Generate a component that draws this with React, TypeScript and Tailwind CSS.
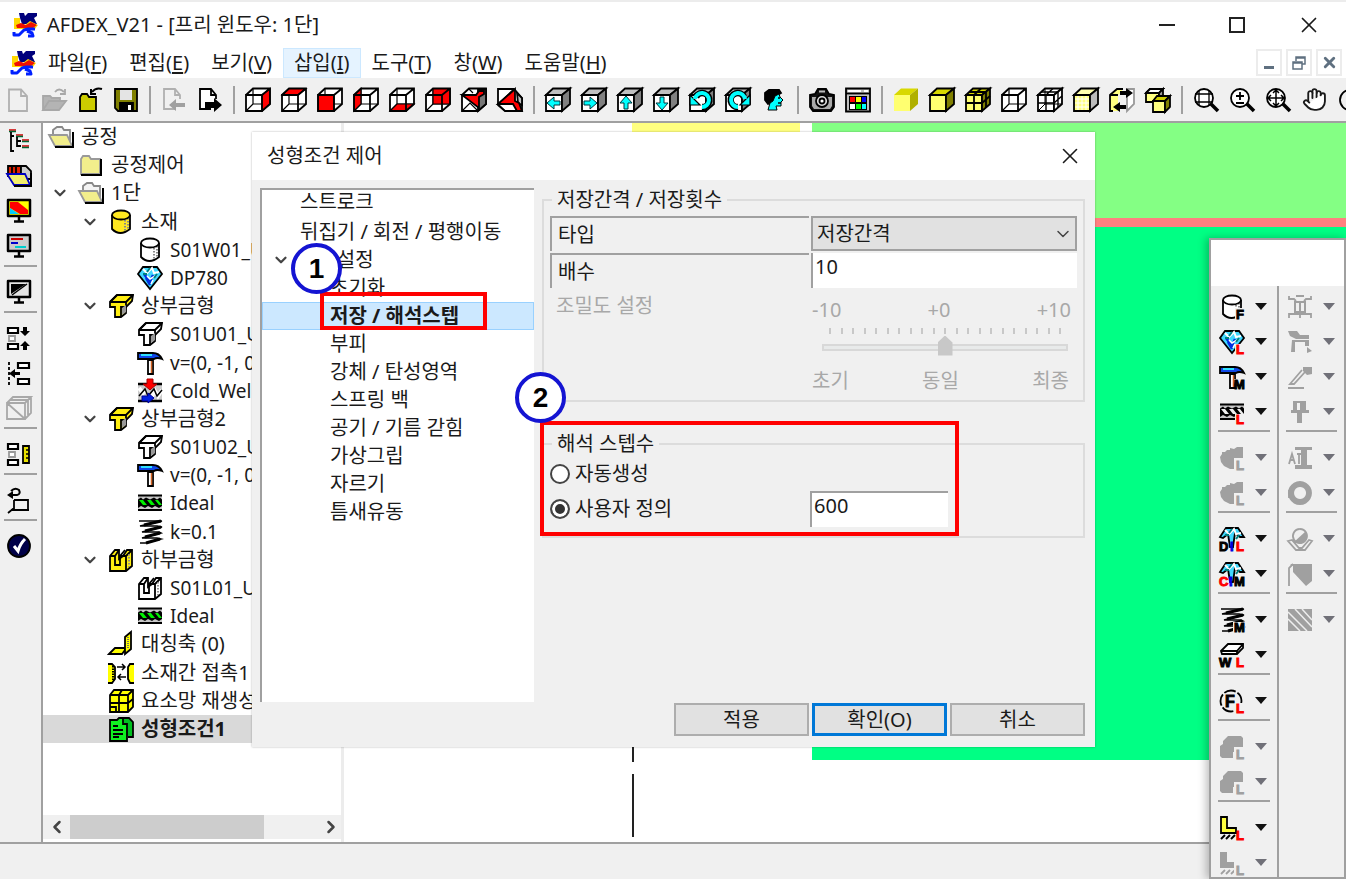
import React from 'react';
import { ChevronDown, ChevronLeft, ChevronRight, Hand, X } from 'lucide-react';

type Kids = { children?: React.ReactNode };

const Svg = ({ children }: Kids) => (
  <svg viewBox="0 0 26 26" className="h-[26px] w-[26px] shrink-0 overflow-visible" fill="none" stroke="#000" strokeWidth="1.8" aria-hidden="true">
    {children}
  </svg>
);

const Letter = ({ x = 17, y = 25, c = '#f00', size = 13, children }: { x?: number; y?: number; c?: string; size?: number; children: React.ReactNode }) => (
  <text x={x} y={y} fill={c} stroke={c} strokeWidth="1" fontSize={size} fontWeight="700" fontFamily="Liberation Sans, sans-serif">
    {children}
  </text>
);

// --- Toolbar cubes ---
const faces = {
  front: 'M1 8H17V24H1Z',
  top: 'M1 8L8 1.500H25L17 8Z',
  right: 'M17 8L25 1.500V17L17 24Z',
  left: 'M1 8L8 1.500V17L1 24Z',
  bottom: 'M1 24L8 17H25L17 24Z',
  back: 'M8 1.500H25V17H8Z',
};

const WireCube = ({ face }: { face?: keyof typeof faces }) => (
  <Svg>
    <path d={faces.front} fill="#fff" stroke="none" />
    <path d={faces.top} fill="#fff" stroke="none" />
    <path d={faces.right} fill="#fff" stroke="none" />
    <path d="M8 1.500V17H25M8 17L1 24" strokeWidth="1.200" />
    {face && <path d={faces[face]} fill="#f00" strokeWidth="1.200" />}
    <path d={faces.front} />
    <path d="M1 8L8 1.500H25V17L17 24M17 8L25 1.500" />
  </Svg>
);

const SolidCube = ({ front = '#fff', top = '#c0c0c0', right = '#808080', line = '#000', children }: { front?: string; top?: string; right?: string; line?: string } & Kids) => (
  <Svg>
    <path d={faces.front} fill={front} stroke={line} />
    <path d={faces.top} fill={top} stroke={line} />
    <path d={faces.right} fill={right} stroke={line} />
    {children}
  </Svg>
);

const arrows = {
  left: 'M2 16L9 10V14H15V18H9V22Z',
  right: 'M16 16L9 10V14H3V18H9V22Z',
  up: 'M9 9L15 16H11V22H7V16H3Z',
  down: 'M9 23L15 16H11V10H7V16H3Z',
};

const CubeArrow = ({ to }: { to: keyof typeof arrows }) => (
  <SolidCube>
    <path d={arrows[to]} fill="#0ff" stroke="#003840" strokeWidth="1" />
  </SolidCube>
);

const CubeCut = ({ flip }: { flip?: boolean }) => (
  <Svg>
    {flip ? (
      <>
        <path d="M1 2H17L25 11V24H8L1 18Z" fill="#fff" />
        <path d="M1 17L17 2M1 17L8 24H22" strokeWidth="1.200" />
        <path d="M20 6L25 11V18L21 16Z" fill="#c0c0c0" />
        <path d="M1 17L18 2V14L22 16L25 24H20L16 17Z" fill="#f00" />
      </>
    ) : (
      <>
        <path d="M1 8L8 1.500H25V17L17 24H1Z" fill="#fff" />
        <path d="M17 2H25V17L17 24Z" fill="#777" />
        <path d="M1 24L9 16L17 24M8 2L12 6" strokeWidth="1.200" />
        <path d="M1 8H15L18 4H23V7L18 10V21Z" fill="#f00" />
      </>
    )}
  </Svg>
);

const CubeTurn = ({ cw }: { cw?: boolean }) => (
  <SolidCube>
    <g transform={cw ? 'translate(26 0) scale(-1 1)' : undefined}>
      <path d="M7 10A7 7 0 1 1 13 20" stroke="#000" strokeWidth="6.500" />
      <path d="M1 8V18H11Z" fill="#0ff" strokeWidth="1.200" />
      <path d="M6 12A7 7 0 1 1 13 20" stroke="#0ff" strokeWidth="4" />
    </g>
  </SolidCube>
);

const Head = () => (
  <Svg>
    <path d="M8 3H18L20 6L15 9L10 16L7 17L4 13V6Z" fill="#000" />
    <path d="M14 9L18 7L19 10L22 13L20 15V19H15L16 23H7L9 16L12 14Z" fill="#0ff" strokeWidth="1" />
    <path d="M17 11H19M17 16H20" strokeWidth="1.500" />
  </Svg>
);

const Camera = () => (
  <Svg>
    <path d="M1 8L6 7L9 2H17L20 7L25 8V20L22 24H4L1 20Z" fill="#111" />
    <path d="M3 10H23V19L21 22H5L3 19Z" fill="#aaa" stroke="none" />
    <circle cx="13" cy="14" r="6" fill="#ddd" stroke="#000" />
    <circle cx="13" cy="14" r="2.500" fill="#fff" />
    <path d="M10 4.500H16" stroke="#bbb" strokeWidth="2" />
  </Svg>
);

const ColorTable = () => (
  <Svg>
    <path d="M1 1.500H25V24.500H1Z" fill="#c0c0c0" />
    <path d="M1 6.500H25" />
    <path d="M3 4H16M19 4H23" stroke="#fff" />
    <path d="M4 9H22V23H4Z" fill="#000" stroke="none" />
    <path d="M5 10H10V15H5Z" fill="#f00" stroke="none" />
    <path d="M11 10H16V15H11Z" fill="#ff0" stroke="none" />
    <path d="M17 10H21V15H17Z" fill="#00f" stroke="none" />
    <path d="M5 17H10V22H5Z" fill="#fff" stroke="none" />
    <path d="M11 17H16V22H11Z" fill="#0f0" stroke="none" />
    <path d="M17 17H21V22H17Z" fill="#0ff" stroke="none" />
  </Svg>
);

const meshLines = 'M9 8V24M1 16H17M9 8L16 1.500M17 16L25 9M4 5H21M21 5V20';

const SwapCube = () => (
  <Svg>
    <path d="M1 8L8 2H13V5L9 8V24H1Z" fill="#ffff80" stroke="none" />
    <path d="M14 2H8L1 8V24H4M1 8H9" />
    <path d="M18 2H25V17L18 24V8" stroke="#999" fill="#fff" />
    <path d="M11 4H17V1L24 6L17 11V8H11Z" fill="#000" stroke="none" />
    <path d="M17 18H11V15L4 20L11 25V22H17Z" fill="#000" stroke="none" />
  </Svg>
);

const CubePair = () => (
  <Svg>
    <path d="M1 6L5 2H18L14 6V15H1Z" fill="#ffff80" />
    <path d="M1 6L5 2H18L14 6Z" fill="#fff" />
    <path d="M14 6L18 2V11L14 15Z" fill="#999" />
    <path d="M8 14H20V25H8Z" fill="#ffff80" />
    <path d="M8 14L12 9H25L20 14Z" fill="#cccc00" />
    <path d="M20 14L25 9V20L20 25Z" fill="#808000" />
  </Svg>
);

const Lens = ({ children }: Kids) => (
  <Svg>
    <circle cx="11" cy="11" r="9" fill="#fff" />
    <path d="M18 17L25 24" strokeWidth="3.500" />
    {children}
  </Svg>
);

// --- File icons ---
const NewFile = () => (
  <Svg>
    <path d="M4 2.500H16L22 9V24H4ZM16 2.500V9H22" stroke="#b0b0b0" />
  </Svg>
);
const OpenFile = () => (
  <Svg>
    <path d="M2 23V9H9L11 11H19V14M2 23L8 14H25L18 23Z" fill="#b4b4b4" stroke="#a8a8a8" />
    <path d="M14 5Q18 0 23 5M24 2V7H19" stroke="#a8a8a8" />
  </Svg>
);
const CloseFile = () => (
  <Svg>
    <path d="M3 10L5 7H10L12 10H19V24H3Z" fill="#cccc00" />
    <path d="M15 5Q19 0 25 2M14 2V7H19" strokeWidth="2" />
  </Svg>
);
const Save = () => (
  <Svg>
    <path d="M2 2H24V24H5L2 21Z" fill="#808000" />
    <path d="M7 3H19V13H7Z" fill="#e4e4e4" stroke="none" />
    <path d="M7 16H20V24H7Z" fill="#000" />
    <path d="M15 18H18V23H15Z" fill="#fff" stroke="none" />
  </Svg>
);
const PageArrow = ({ gray }: { gray?: boolean }) => (
  <Svg>
    <path d="M14 22H3V2H14L19 8V12M14 2V8H19" stroke={gray ? '#b0b0b0' : '#000'} fill={gray ? 'none' : '#fff'} />
    {gray ? (
      <path d="M8 18L15 12V16H24V20H15V24Z" fill="#a0a0a0" stroke="none" />
    ) : (
      <path d="M25 18L17 11V15H8V21H17V25Z" fill="#000" stroke="none" />
    )}
  </Svg>
);

const AppLogo = () => (
  <Svg>
    <path d="M6 1H11L12 4L15 1H24V4L21 6L24 12H9L7 6Z" fill="#00007c" stroke="none" />
    <path d="M1 6H7V11L12 13L17 9L25 13L22 17H1Z" fill="#ffd800" stroke="none" />
    <path d="M3 13L8 11L13 13L18 10L24 13L20 16H4Z" fill="#f01000" stroke="none" />
    <path d="M1 20V23H6L11 18L15 17H22M14 19L19 21L20 24H15" stroke="#0020ff" strokeWidth="3" strokeLinejoin="round" />
  </Svg>
);

// --- Tree icons ---
const FolderOpen = () => (
  <Svg>
    <path d="M5 11V6L9 3H14L16 6H22V18" fill="#f4f4f4" stroke="#888" />
    <path d="M1 11H19L24 22H7Z" fill="#f2ee8c" stroke="#999" />
    <path d="M7 23H25V8" strokeWidth="2" />
  </Svg>
);
const FolderShut = () => (
  <Svg>
    <path d="M3 7L5 4H11L13 7H22V22H3Z" fill="#f2ee8c" stroke="#999" />
    <path d="M3 23H23V7" strokeWidth="2" />
  </Svg>
);
const Cylinder = ({ fill = '#fff', children }: { fill?: string } & Kids) => (
  <Svg>
    <path d="M4 6V20Q12 28 22 20V6" fill={fill} />
    <path d="M17 11V22M20 9V20" stroke="#888" strokeDasharray="1.500 1.500" strokeWidth="2" />
    <ellipse cx="13" cy="6" rx="9" ry="4.500" fill={fill} />
    {children}
  </Svg>
);
const Diamond = ({ cut, children }: { cut?: boolean } & Kids) => (
  <Svg>
    <path d={cut ? 'M1 11L7 2H19L25 11H21L16 7L14 21H11L9 8L4 12Z' : 'M1 9L6 2H20L25 9L13 24Z'} fill="#40d8ff" />
    <path d="M6 4L10 8L15 3L17 8L22 7" stroke="#fff" strokeWidth="2" />
    {!cut && <path d="M7 9L13 17L16 10M9 13L13 20" stroke="#0030e0" strokeWidth="2.500" />}
    {!cut && <path d="M10 11L13 14L20 10M14 19L16 15" stroke="#fff" strokeWidth="1.500" />}
    <path d="M13 3L10 7M20 9L17 13M6 9H10" stroke="#008080" strokeWidth="2" />
    {children}
  </Svg>
);
const UpperDie = ({ fill = '#fff' }: { fill?: string }) => (
  <Svg>
    <path d="M2 9L9 2H25L24 8L18 14V20L13 24H7V14H2Z" fill={fill} />
    <path d="M2 9H18L25 2M18 9V14H13V24M9 2L2 9" />
    <path d="M14 15L18 12V19L14 22Z" fill="#999" stroke="none" />
  </Svg>
);
const LowerDie = ({ fill = '#fff' }: { fill?: string }) => (
  <Svg>
    <path d="M2 9L7 3H11V12L15 9L19 3H24V19L18 24H2Z" fill={fill} />
    <path d="M2 9H7V18H12V9H18V24M7 9L11 3M12 9L17 3M18 9L24 3" />
    <path d="M21 7V20" stroke="#888" strokeDasharray="1.500 1.500" />
  </Svg>
);
const Hammer = ({ children }: Kids) => (
  <Svg>
    <path d="M1 3H16Q22 3 25 9Q20 7 17 9H1Z" fill="#1048e8" />
    <path d="M4 5H15" stroke="#30e0ff" strokeWidth="2" />
    <path d="M11 10H16V24H11Z" fill="#fff" />
    <path d="M14.500 11V23" stroke="#d06020" strokeWidth="1.500" />
    {children}
  </Svg>
);
const Friction = () => (
  <Svg>
    <path d="M1 6H25V23H1Z" fill="#ccc" stroke="none" />
    <path d="M1 6H25M1 23H25" strokeWidth="2.500" />
    <path d="M2 10L6 15L9 12M14 20L18 13L21 18L25 12" stroke="#fff" strokeWidth="4" />
    <path d="M2 18L8 11L11 18L17 11L20 18L25 12" strokeWidth="1.500" />
    <path d="M10 1H16V6H20L13 12L6 6H10Z" fill="#f00" stroke="#a00" strokeWidth="1" />
    <path d="M5 18H11V15L17 20L11 25V23H5Z" fill="#0020e0" stroke="#009" strokeWidth="1" />
  </Svg>
);
const Waves = ({ color = '#00f000', children }: { color?: string } & Kids) => (
  <Svg>
    <path d="M1 5H25V20H1Z" fill="#c8c8c8" stroke="none" />
    <path d="M1 5.500H25M1 20H25" strokeWidth="2" />
    <path d="M1 9.500L4 7.500L6 9.500L9 7.500L13 9.500L17 7.500L20 9.500L23 7.500L25 9.500V16L22 18L18 16L15 18L11 16L8 18L4 16L1 18Z" fill="#000" stroke="none" />
    <path d="M2 10H6L10 15H6ZM10 10H14L18 15H14ZM18 10H21L25 15H22Z" fill={color} stroke="none" />
    {children}
  </Svg>
);
const Spring = ({ children }: Kids) => (
  <Svg>
    <path d="M2 2H25L3 7H20L25 8L5 13H22L24 14L5 19H20L24 20L9 24H3" strokeWidth="1.500" />
    <path d="M24 2L7 6M24 8L8 12M23 14L8 18M23 20L9 24" strokeWidth="3" />
    {children}
  </Svg>
);
const SymPlane = () => (
  <Svg>
    <path d="M1 23L7 17H17V19L14 23Z" fill="#ff0" />
    <path d="M17 17V6L23 1V18L17 23Z" fill="#ff0" />
    <path d="M20 6V18" stroke="#666" strokeDasharray="1 1" />
  </Svg>
);
const Contact = () => (
  <Svg>
    <path d="M0 4H4L7 7V19L4 23H0" fill="#ff0" />
    <path d="M5 6V21" strokeDasharray="1.500 1" strokeWidth="2" />
    <path d="M26 4H22L20 7V19L22 23H26" fill="#ff0" />
    <path d="M9 7H17M14 4L17 7L14 10M18 17H10M13 14L10 17L13 20" strokeWidth="1.500" />
  </Svg>
);
const Remesh = () => (
  <Svg>
    <path d="M2 7L6 2H25V19L20 24H2Z" fill="#ff0" />
    <path d="M2 7H20L25 2M20 7V24M11 7V24M2 15H20M11 7L14 2M20 15L25 11M2 19H8V24" />
  </Svg>
);
const Sheets = () => (
  <Svg>
    <path d="M12 5L15 2H21L25 6V21H20" fill="#00c020" />
    <path d="M2 4H9L11 2H15V8H19V25H2Z" fill="#10f020" />
    <path d="M5 10H10M5 14H15M5 18H15M5 21H11" />
  </Svg>
);

// --- Side bar icons ---
const Outline = () => (
  <Svg>
    <path d="M3 2H10M10 7H17M16 12H23M16 18H23" stroke="#c00" strokeWidth="1.500" />
    <path d="M3 3.500H10M10 8.500H17M16 13.500H23M16 19.500H23" stroke="#063" strokeWidth="1.500" />
    <path d="M5 4V23H8M11 9V18H15M11 13H15M5 8H8" />
  </Svg>
);
const Books = () => (
  <Svg>
    <path d="M2 3H15V13H2Z" fill="#e02000" />
    <path d="M6 3V13M10 3V13" />
    <path d="M15 3H20L25 8V16H15Z" fill="#ccc" />
    <path d="M1 11H19L24 22H8Z" fill="#f2ee6c" stroke="#0000c0" />
    <path d="M8 23H25V10" strokeWidth="2" />
  </Svg>
);
const Monitor = ({ fill = '#fff', children }: { fill?: string } & Kids) => (
  <Svg>
    <path d="M2 2H24V18H2Z" fill={fill} strokeWidth="2.500" strokeLinejoin="round" />
    {children}
    <path d="M13 18V23M8 23.500H18" strokeWidth="2.500" />
  </Svg>
);
const Gap = () => (
  <Svg>
    <path d="M2 3H12V8H2ZM2 19H12V24H2Z" fill="#fff" strokeWidth="2.200" />
    <path d="M3 11H9V16H3Z" stroke="#999" fill="#fff" />
    <path d="M19 2V6M19 25V21" strokeWidth="4" />
    <path d="M14 6H24L19 11ZM14 21H24L19 16Z" fill="#000" stroke="none" />
  </Svg>
);
const Align = () => (
  <Svg>
    <path d="M3 2V25" strokeDasharray="3 2" />
    <path d="M12 3H23V8H12ZM12 19H23V24H12Z" fill="#fff" strokeWidth="2.200" />
    <path d="M3 13.500L9 9V12H14V15H9V18Z" fill="#000" stroke="none" />
  </Svg>
);
const GhostCube = () => (
  <Svg>
    <path d="M1 8H19V24H1ZM1 8L7 2H25L19 8M25 2V18L19 24M1 8L19 24M22 5V20M4 5H22" stroke="#a8a8a8" />
  </Svg>
);
const Ruler = () => (
  <Svg>
    <path d="M2 3H12V8H2ZM2 19H12V24H2Z" fill="#fff" strokeWidth="2.200" />
    <path d="M3 11H9V16H3Z" stroke="#999" fill="#fff" />
    <path d="M17 5H23V22H17Z" fill="#e8e000" />
    <path d="M20 9H23M20 13H23M20 17H23" strokeWidth="1.500" />
  </Svg>
);
const RotateBox = () => (
  <Svg>
    <path d="M8 13H22V23H8M8 13V23M8 21L2 26M5 23H23" />
    <path d="M3 8H11Q15 7 13 3Q9 0 5 4" strokeWidth="2" />
    <path d="M1 8L7 4V12Z" fill="#000" stroke="none" />
  </Svg>
);
const Check = () => (
  <Svg>
    <circle cx="13" cy="13" r="11" fill="#000048" stroke="#000" />
    <path d="M8 13L12 18Q14 11 19 6" stroke="#fff" strokeWidth="3" />
  </Svg>
);

// --- Palette icons ---
const Patch = ({ d }: { d: string }) => <path d={d} fill="#f0f0f0" stroke="none" />;

const GrayShape = ({ d, line, letter }: { d: string; line?: string; letter?: boolean }) => (
  <Svg>
    <path d={d} fill="#a0a0a0" fillRule="evenodd" stroke="none" />
    {line && <path d={line} stroke="#a0a0a0" />}
    {letter && (
      <>
        <Patch d="M15 13H26V26H15Z" />
        <Letter c="#a0a0a0">L</Letter>
      </>
    )}
  </Svg>
);
const Welding = () => (
  <Svg>
    <path d="M2 9L9 2H24V6L18 12H3Z" fill="#fff" />
    <path d="M2 9H18L24 2M18 9V12" />
    <Letter x={0} c="#000">W</Letter>
    <Letter>L</Letter>
  </Svg>
);
const ForceL = () => (
  <Svg>
    <circle cx="12" cy="13" r="10.500" strokeDasharray="12 2" />
    <Letter x={6} y={19} c="#000" size={16}>F</Letter>
    <Patch d="M16 15H26V26H16Z" />
    <Letter>L</Letter>
  </Svg>
);
const Base = () => (
  <Svg>
    <path d="M2 2H8V13H17V18H2Z" fill="#ffff40" />
    <path d="M2 24L6 20M7 24L11 20M12 24L16 20" strokeWidth="2" />
    <Letter>L</Letter>
  </Svg>
);

const grayBlob = 'M1 12L3 9V7H6L8 5H11V3L15 4L18 2H24V18H16V24H11L5 21L2 17Z';
const grayBlock = 'M1 12L4 10V7L9 2H22L24 4V18H14V24H3L1 22Z';
const grayBase = 'M1 2H8V12H15V18H1Z';

// null marks a separator
const toolbar: ([string, React.ReactNode] | null)[] = [
  ['새 파일', <NewFile />],
  ['열기', <OpenFile />],
  ['닫기', <CloseFile />],
  ['저장', <Save />],
  null,
  ['이전', <PageArrow gray />],
  ['다음', <PageArrow />],
  null,
  ['우측면', <WireCube face="right" />],
  ['윗면', <WireCube face="top" />],
  ['정면', <WireCube face="front" />],
  ['좌측면', <WireCube face="left" />],
  ['밑면', <WireCube face="bottom" />],
  ['뒷면', <WireCube face="back" />],
  ['등각 1', <CubeCut />],
  ['등각 2', <CubeCut flip />],
  null,
  ['왼쪽 회전', <CubeArrow to="left" />],
  ['오른쪽 회전', <CubeArrow to="right" />],
  ['위로 회전', <CubeArrow to="up" />],
  ['아래로 회전', <CubeArrow to="down" />],
  ['반시계 회전', <CubeTurn />],
  ['시계 회전', <CubeTurn cw />],
  ['시점', <Head />],
  null,
  ['캡처', <Camera />],
  ['색상표', <ColorTable />],
  null,
  ['음영', <SolidCube front="#ffff70" top="#d8d800" right="#b0b000" line="none" />],
  ['음영과 외곽선', <SolidCube front="#ffff70" top="#d8d800" right="#808000" />],
  ['음영과 요소망', <SolidCube front="#ffff70" top="#d8d800" right="#808000"><path d={meshLines} /></SolidCube>],
  ['외곽선', <WireCube />],
  ['요소망', <SolidCube top="#fff" right="#fff"><path d={meshLines} strokeWidth="1.400" /><path d="M8 2V17H25M8 17L1 24" strokeWidth="1" /></SolidCube>],
  ['격자', <SolidCube front="#ffff80" top="#ffffb0" right="#bbb"><path d="M5 9V23M9 9V23M13 9V23M2 12H16M2 16H16M2 20H16" stroke="#fff" strokeWidth="1" /></SolidCube>],
  ['교체', <SwapCube />],
  ['복제', <CubePair />],
  null,
  ['영역 확대', <Lens><path d="M6 7H16V15H6ZM2 7H20M2 15H20M6 4V18M16 4V18" strokeWidth="1.300" /></Lens>],
  ['확대/축소', <Lens><path d="M7 9H15M11 5V13M7 16H15" strokeWidth="1.800" /></Lens>],
  ['전체 보기', <Lens><path d="M11 3V19M3 11H19M8 6L11 3L14 6M8 16L11 19L14 16M6 8L3 11L6 14M16 8L19 11L16 14" strokeWidth="1.500" /></Lens>],
  ['이동', <Hand size={25} strokeWidth={1.8} fill="#fff" />],
  ['회전', <Svg><circle cx="13" cy="13" r="10" /></Svg>],
];

const sidebar: ([string, React.ReactNode] | null)[] = [
  ['트리', <Outline />],
  ['자료', <Books />],
  ['결과', <Monitor fill="#ff0"><path d="M4 4H12L22 12V16H14L4 10Z" fill="#f00" stroke="none" /><path d="M4 10L13 16H4Z" fill="#0cf" stroke="none" /></Monitor>],
  ['그래프', <Monitor fill="#ccc"><path d="M5 6H17" stroke="#c00" strokeWidth="2" /><path d="M5 10H12" stroke="#00c" strokeWidth="2" /><path d="M9 14H20" stroke="#0cc" strokeWidth="2" /></Monitor>],
  null,
  ['화면', <Monitor fill="#e4e4e4"><path d="M5 5H20L5 15Z" fill="#000" stroke="none" /><path d="M6 16L21 5" strokeWidth="1.500" /></Monitor>],
  null,
  ['간격', <Gap />],
  ['정렬', <Align />],
  ['단면', <GhostCube />],
  null,
  ['측정', <Ruler />],
  null,
  ['회전', <RotateBox />],
  null,
  ['확인', <Check />],
];

type Tool = { name: string; icon: React.ReactNode; off?: boolean };

const paletteLeft: (Tool | null)[] = [
  { name: '소재', icon: <Cylinder><Patch d="M16 14H26V26H16Z" /><Letter c="#000">F</Letter></Cylinder> },
  { name: '재료', icon: <Diamond><Patch d="M16 15H26V26H16Z" /><Letter>L</Letter></Diamond> },
  { name: '운동', icon: <Hammer><Patch d="M15 15H26V26H17Z" /><Letter x={15} c="#000">M</Letter></Hammer> },
  { name: '마찰', icon: <Waves color="#eee"><Patch d="M16 15H26V26H16Z" /><Letter>L</Letter></Waves> },
  null,
  { name: '형상 1', icon: <GrayShape d={grayBlob} letter />, off: true },
  { name: '형상 2', icon: <GrayShape d={grayBlob} letter />, off: true },
  null,
  { name: '재료 DB', icon: <Diamond cut><Letter x={0} c="#000">D</Letter><Letter x={11} c="#00d">i</Letter><Letter>L</Letter></Diamond> },
  { name: '재료 사용자', icon: <Diamond cut><Letter x={0}>C</Letter><Letter x={10} c="#00d">i</Letter><Letter x={15} c="#000">M</Letter></Diamond> },
  null,
  { name: '스프링', icon: <Spring><Patch d="M14 15H26V26H14Z" /><Letter x={15} c="#000">M</Letter></Spring> },
  { name: '용접', icon: <Welding /> },
  null,
  { name: '하중', icon: <ForceL /> },
  null,
  { name: '블록 1', icon: <GrayShape d={grayBlock} letter />, off: true },
  { name: '블록 2', icon: <GrayShape d={grayBlock} letter />, off: true },
  null,
  { name: '고정', icon: <Base /> },
  { name: '고정 해제', icon: <GrayShape d={grayBase} line="M2 24L6 20M7 24L11 20M12 24L16 20" letter />, off: true },
];

const paletteRight: (Tool | null)[] = [
  { name: '단조', icon: <GrayShape d="M7 7H19V19H7ZM9 9V17H12V9ZM14 9V17H17V9Z" line="M2 2V5H7L9 7M24 2V5H19L17 7M2 24V20H24V24M9 2H17M13 19V24" />, off: true },
  { name: '로봇', icon: <GrayShape d="M1 2H10L13 6H22V10H9L3 7ZM5 11H22V17H18V13H8V23H4ZM20 18L25 22L20 24Z" />, off: true },
  { name: '스포이트', icon: <GrayShape d="M16 3H25V10L20 11L16 7ZM1 23H17V25H1Z" line="M18 8L7 20H3L15 6" />, off: true },
  { name: '펀치', icon: <GrayShape d="M6 2H19V11H22V14H15V24H10V14H4V11H6ZM10 4V11H13V4Z" />, off: true },
  null,
  { name: '자동', icon: <GrayShape d="M8 2H25V5H20V20H25V24H8V20H14V5H8Z" line="M2 19L5 9L8 19M3 15H7M10 9H18M12 9V19" />, off: true },
  { name: '링', icon: <GrayShape d="M13 1A12 12 0 1 1 12.900 1ZM13 7A6 6 0 1 0 13.100 7Z" line="M2 10V18" />, off: true },
  null,
  { name: '베어링', icon: <GrayShape d="M7 16L19 5L20 13L14 18Z" line="M13 3A7 7 0 1 1 12.900 3M1 15L5 14L12 22H15L22 14L25 15L18 24H9Z" />, off: true },
  { name: '곡면', icon: <GrayShape d="M3 3H25V20L19 25L6 11V5Z" line="M2 25V7L6 3" />, off: true },
  null,
  { name: '해칭', icon: <Svg><path d="M1 2H25V24H1Z" fill="#a0a0a0" stroke="none" /><path d="M1 5L20 24M8 2L25 20M1 12L13 24M15 2L25 13" stroke="#eee" strokeWidth="1.500" /></Svg>, off: true },
];

type Node = { level: number; label: string; icon: React.ReactNode; open?: boolean; active?: boolean };

const tree: Node[] = [
  { level: 0, label: '공정', icon: <FolderOpen /> },
  { level: 1, label: '공정제어', icon: <FolderShut /> },
  { level: 1, label: '1단', icon: <FolderOpen />, open: true },
  { level: 2, label: '소재', icon: <Cylinder fill="#ffe820" />, open: true },
  { level: 3, label: 'S01W01_U', icon: <Cylinder /> },
  { level: 3, label: 'DP780', icon: <Diamond /> },
  { level: 2, label: '상부금형', icon: <UpperDie fill="#ffee10" />, open: true },
  { level: 3, label: 'S01U01_U', icon: <UpperDie /> },
  { level: 3, label: 'v=(0, -1, 0)', icon: <Hammer /> },
  { level: 3, label: 'Cold_Well', icon: <Friction /> },
  { level: 2, label: '상부금형2', icon: <UpperDie fill="#ffee10" />, open: true },
  { level: 3, label: 'S01U02_U', icon: <UpperDie /> },
  { level: 3, label: 'v=(0, -1, 0)', icon: <Hammer /> },
  { level: 3, label: 'Ideal', icon: <Waves /> },
  { level: 3, label: 'k=0.1', icon: <Spring /> },
  { level: 2, label: '하부금형', icon: <LowerDie fill="#ffee10" />, open: true },
  { level: 3, label: 'S01L01_U', icon: <LowerDie /> },
  { level: 3, label: 'Ideal', icon: <Waves /> },
  { level: 2, label: '대칭축 (0)', icon: <SymPlane /> },
  { level: 2, label: '소재간 접촉1', icon: <Contact /> },
  { level: 2, label: '요소망 재생성', icon: <Remesh /> },
  { level: 2, label: '성형조건1', icon: <Sheets />, active: true },
];

const indent = ['pl-[5px]', 'pl-[5px]', 'pl-[35px]', 'pl-16 text-[19px]'];

const menus = [
  ['파일', 'F'], ['편집', 'E'], ['보기', 'V'], ['삽입', 'I'], ['도구', 'T'], ['창', 'W'], ['도움말', 'H'],
];

const subPages = ['부피', '강체 / 탄성영역', '스프링 백', '공기 / 기름 갇힘', '가상그립', '자르기', '틈새유동'];

const Callout = ({ n }: { n: number }) => (
  <span className="flex h-[51px] w-[51px] items-center justify-center rounded-full border-4 border-[#1414d2] bg-white font-['Liberation_Sans',sans-serif] text-[28px] leading-none font-bold text-black">
    {n}
  </span>
);

const PaletteColumn = ({ tools }: { tools: (Tool | null)[] }) => (
  <div className="flex flex-1 flex-col pt-[3px]">
    {tools.map((tool, i) =>
      tool ? (
        <button key={i} aria-label={tool.name} disabled={tool.off} className="flex h-[35px] shrink-0 items-center gap-[10px] pl-2">
          {tool.icon}
          <span className={`h-0 w-0 border-x-[6px] border-t-[7px] border-x-transparent ${tool.off ? 'border-t-[#707078]' : 'border-t-[#111]'}`}></span>
        </button>
      ) : (
        <div key={i} className="h-[11px] shrink-0 px-[7px] pt-px">
          <div className="h-[2px] bg-[#a0a0a0]"></div>
        </div>
      )
    )}
  </div>
);

const Palette = () => (
  <aside className="absolute top-[238px] right-0 bottom-0 flex w-[137px] flex-col overflow-hidden border-2 border-[#a0a0a0] bg-[#f0f0f0] shadow-[-3px_0_8px_rgba(0,0,0,0.25)]">
    <div className="h-[46px] shrink-0 bg-white"></div>
    <div className="flex min-h-0 flex-1">
      <PaletteColumn tools={paletteLeft} />
      <div className="w-[2px] bg-[#a0a0a0]"></div>
      <PaletteColumn tools={paletteRight} />
    </div>
  </aside>
);

const ConditionDialog = () => (
  <section role="dialog" aria-label="성형조건 제어" className="absolute top-[132px] left-[252px] w-[843px] bg-[#f0f0f0] shadow-[0_0_2px_rgba(0,0,0,0.3)]">
    <header className="flex h-12 items-center justify-between bg-white pr-3 pl-[15px]">
      <h2>성형조건 제어</h2>
      <button aria-label="닫기"><X size={26} strokeWidth={1.5} /></button>
    </header>

    <div className="flex gap-2 pt-2 pr-[10px] pl-2">
      <ul className="relative h-[514px] w-[274px] shrink-0 border-t-2 border-l-2 border-[#a0a0a0] bg-white">
        <li className="h-7 pl-[38px] leading-6">스트로크</li>
        <li className="h-7 pl-[38px] leading-7">뒤집기 / 회전 / 평행이동</li>
        <li className="flex h-7 items-center pl-[10px]">
          <ChevronDown size={18} strokeWidth={3} className="text-[#444]" />
          <span className="pl-[10px]">기본설정</span>
        </li>
        <li className="h-7 pl-[68px] leading-7">초기화</li>
        <li className="relative flex h-7 items-center border border-[#99d1ff] bg-[#cce8ff] pl-[67px] font-bold">
          저장 / 해석스텝
          <span className="absolute -top-[11px] left-[57px] h-[38px] w-[167px] border-4 border-[#f00]"></span>
        </li>
        {subPages.map((page) => (
          <li key={page} className="h-7 pl-[68px] leading-7">{page}</li>
        ))}
        <li className="absolute top-[53px] left-[29px]"><Callout n={1} /></li>
      </ul>

      <div className="flex flex-1 flex-col gap-[30px]">
        <fieldset className="h-[214px] border-2 border-[#dcdcdc] px-[6px]">
          <legend className="ml-[2px] h-6 px-[5px] leading-6">저장간격 / 저장횟수</legend>
          <div className="mt-1 grid grid-cols-[259px_1fr] gap-x-[2px] gap-y-[2px]">
            <label htmlFor="save-type" className="flex h-[35px] items-center border-t-2 border-l-2 border-[#a0a0a0] pl-[6px]">타입</label>
            <div className="relative flex">
              <select id="save-type" className="w-full appearance-none border-2 border-[#a0a0a0] bg-[#e1e1e1] pl-1 leading-6">
                <option>저장간격</option>
              </select>
              <ChevronDown size={20} strokeWidth={1.8} className="pointer-events-none absolute top-2 right-1 text-[#444]" />
            </div>
            <label htmlFor="multiple" className="flex h-[35px] items-center border-t-2 border-l-2 border-[#a0a0a0] pl-[6px]">배수</label>
            <input id="multiple" defaultValue="10" className="min-w-0 border-l-2 border-[#a0a0a0] bg-white pb-2 pl-[2px] leading-6" />
          </div>
          <div className="flex justify-between pt-1 text-[#a8a8a8]">
            <label htmlFor="density" className="pl-[6px] leading-7">조밀도 설정</label>
            <div className="w-[265px] pt-[6px]">
              <div className="flex justify-between pr-[6px] leading-6"><span>-10</span><span>+0</span><span>+10</span></div>
              <div className="flex justify-between pt-[6px] pr-4 pl-[17px]">
                {Array.from({ length: 21 }, (_, i) => (
                  <span key={i} className="h-[6px] w-[2px] bg-[#c8c8c8]"></span>
                ))}
              </div>
              <input
                id="density"
                type="range"
                min={-10}
                max={10}
                defaultValue={0}
                disabled
                className="mt-[3px] ml-[10px] block h-5 w-[246px] appearance-none bg-transparent [&::-webkit-slider-runnable-track]:h-[7px] [&::-webkit-slider-runnable-track]:border-2 [&::-webkit-slider-runnable-track]:border-[#d8d8d8] [&::-webkit-slider-runnable-track]:bg-[#e8eaea] [&::-webkit-slider-thumb]:-mt-[10px] [&::-webkit-slider-thumb]:h-5 [&::-webkit-slider-thumb]:w-[15px] [&::-webkit-slider-thumb]:appearance-none [&::-webkit-slider-thumb]:bg-[#c8c8c8] [&::-webkit-slider-thumb]:[clip-path:polygon(50%_0,100%_35%,100%_100%,0_100%,0_35%)]"
              />
              <div className="mt-3 flex justify-between pr-2 leading-6"><span>초기</span><span>동일</span><span>최종</span></div>
            </div>
          </div>
        </fieldset>

        <fieldset className="relative h-[106px] border-2 border-[#dcdcdc] px-[6px]">
          <legend className="ml-[2px] h-6 px-[5px] leading-6">해석 스텝수</legend>
          <label className="flex h-[35px] items-center gap-[5px]">
            <input type="radio" name="steps" className="h-5 w-5 appearance-none rounded-full border-2 border-[#444] bg-white checked:bg-[#333] checked:shadow-[inset_0_0_0_3px_white]" />
            자동생성
          </label>
          <div className="flex h-[35px] items-center">
            <label className="flex w-[260px] items-center gap-[5px]">
              <input type="radio" name="steps" defaultChecked className="h-5 w-5 appearance-none rounded-full border-2 border-[#444] bg-white checked:bg-[#333] checked:shadow-[inset_0_0_0_3px_white]" />
              사용자 정의
            </label>
            <input aria-label="스텝수" defaultValue="600" className="h-9 w-[138px] border-t-2 border-l-2 border-[#a0a0a0] bg-white pb-2 pl-[2px] leading-6" />
          </div>
          <span className="pointer-events-none absolute -top-[35px] -left-1 h-[115px] w-[419px] border-4 border-[#f00]"></span>
          <span className="absolute -top-[84px] -left-[29px]"><Callout n={2} /></span>
        </fieldset>
      </div>
    </div>

    <footer className="flex justify-end gap-[3px] pt-px pr-[10px] pb-[11px]">
      <button className="h-[33px] w-[135px] border-2 border-[#adadad] bg-[#e1e1e1] leading-none">적용</button>
      <button className="h-[33px] w-[135px] border-[3px] border-[#0078d7] bg-[#e1e1e1] leading-none">확인(O)</button>
      <button className="h-[33px] w-[135px] border-2 border-[#adadad] bg-[#e1e1e1] leading-none">취소</button>
    </footer>
  </section>
);

const App = () => (
  <div className="relative flex min-h-screen flex-col overflow-hidden bg-[#f0f0f0] font-['Noto_Sans','Noto_Sans_CJK_KR',sans-serif] text-[20px] leading-7 text-[#1a1a1a]">
    {/* Title bar */}
    <header className="flex h-[47px] items-center border-t-2 border-[#ececec] bg-white pl-[13px]">
      <AppLogo />
      <h1 className="flex-1 pl-2">AFDEX_V21 - [프리 윈도우: 1단]</h1>
      <button aria-label="최소화" className="flex w-[70px] justify-center"><span className="h-[2px] w-4 bg-[#222]"></span></button>
      <button aria-label="최대화" className="flex w-[70px] justify-center"><span className="h-4 w-4 border-2 border-[#222]"></span></button>
      <button aria-label="닫기" className="flex w-[74px] justify-center"><X size={26} strokeWidth={1.6} /></button>
    </header>

    <nav className="flex h-[31px] items-center bg-white pr-1 pl-[11px]">
      <AppLogo />
      {menus.map(([name, key]) => (
        <button key={key} className={`h-[30px] border px-[10px] leading-7 ${key === 'I' ? 'border-[#cce8ff] bg-[#e5f3ff]' : 'border-transparent'}`}>
          {name}(<u className="underline-offset-2">{key}</u>)
        </button>
      ))}
      <div className="ml-auto flex gap-1 text-[#5f7080]">
        <button aria-label="문서 최소화" className="flex h-[27px] w-[26px] items-end justify-center border-2 border-[#ececec] pb-[5px]"><span className="h-[3px] w-[10px] bg-current"></span></button>
        <button aria-label="문서 복원" className="flex h-[27px] w-[26px] items-center justify-center border-2 border-[#ececec]">
          <svg viewBox="0 0 14 14" className="h-[14px] w-[14px]" fill="none" stroke="currentColor" strokeWidth="1.500">
            <path d="M4 5V1H13V8H10M4 2H13M1 6H10V13H1ZM1 7H10" />
          </svg>
        </button>
        <button aria-label="문서 닫기" className="flex h-[27px] w-[26px] items-center justify-center border-2 border-[#ececec]"><X size={17} strokeWidth={4} /></button>
      </div>
    </nav>

    {/* Toolbar */}
    <div className="flex h-[43px] items-center overflow-hidden">
      {toolbar.map((item, i) =>
        item ? (
          <button key={i} aria-label={item[0]} className="flex w-9 shrink-0 items-center justify-center">{item[1]}</button>
        ) : (
          <div key={i} className="flex w-3 shrink-0 justify-center"><span className="h-7 w-[2px] bg-[#a0a0a0]"></span></div>
        )
      )}
    </div>

    <main className="flex flex-1 border-y-2 border-[#a0a0a0]">
      <div className="flex w-[43px] shrink-0 flex-col border-r-2 border-[#a0a0a0] bg-[#f0f0f0] pr-1">
        {sidebar.map((item, i) =>
          item ? (
            <button key={i} aria-label={item[0]} className="flex h-[35px] shrink-0 items-center justify-center">{item[1]}</button>
          ) : (
            <div key={i} className="h-[11px] shrink-0 pt-[2px] pl-1"><div className="h-[2px] bg-[#a0a0a0]"></div></div>
          )
        )}
      </div>

      <div className="flex w-[301px] shrink-0 flex-col overflow-hidden border-r-[3px] border-[#ececec] bg-white">
        <ul className="grid h-[620px] auto-rows-fr">
          {tree.map((node, i) => (
            <li key={i} className={`flex items-center whitespace-nowrap ${indent[node.level]} ${node.active ? 'bg-[#d9d9d9] font-bold' : ''}`}>
              {node.level > 0 && (
                <span className="w-[30px] shrink-0 pl-[3px]">
                  {node.open && <ChevronDown size={18} strokeWidth={3} className="text-[#444]" />}
                </span>
              )}
              {node.icon}
              <span className="pl-[7px] leading-6">{node.label}</span>
            </li>
          ))}
        </ul>
        <div className="mt-auto mb-[3px] flex h-6 items-center bg-[#f0f0f0] pl-1">
          <ChevronLeft size={20} strokeWidth={3} className="text-[#444]" />
          <div className="mx-[3px] flex-1"><div className="h-6 w-[194px] bg-[#cdcdcd]"></div></div>
          <ChevronRight size={20} strokeWidth={3} className="text-[#444]" />
        </div>
      </div>

      {/* Model view */}
      <div className="relative flex-1 bg-white">
        <svg className="absolute inset-0 h-full w-full" aria-hidden="true">
          <rect x="288" y="0" width="168" height="40" fill="#ffff80" />
          <rect x="468" y="0" width="100%" height="95" fill="#84ff84" />
          <rect x="468" y="95" width="100%" height="9" fill="#ff8080" />
          <rect x="468" y="104" width="100%" height="533" fill="#00ff84" />
          <path d="M289 620V639M289 651V714" stroke="#222" strokeWidth="2" />
        </svg>
      </div>
    </main>

    <footer className="h-[35px] bg-[#f0f0f0]"></footer>

    <ConditionDialog />
    <Palette />
  </div>
);

export default App;
